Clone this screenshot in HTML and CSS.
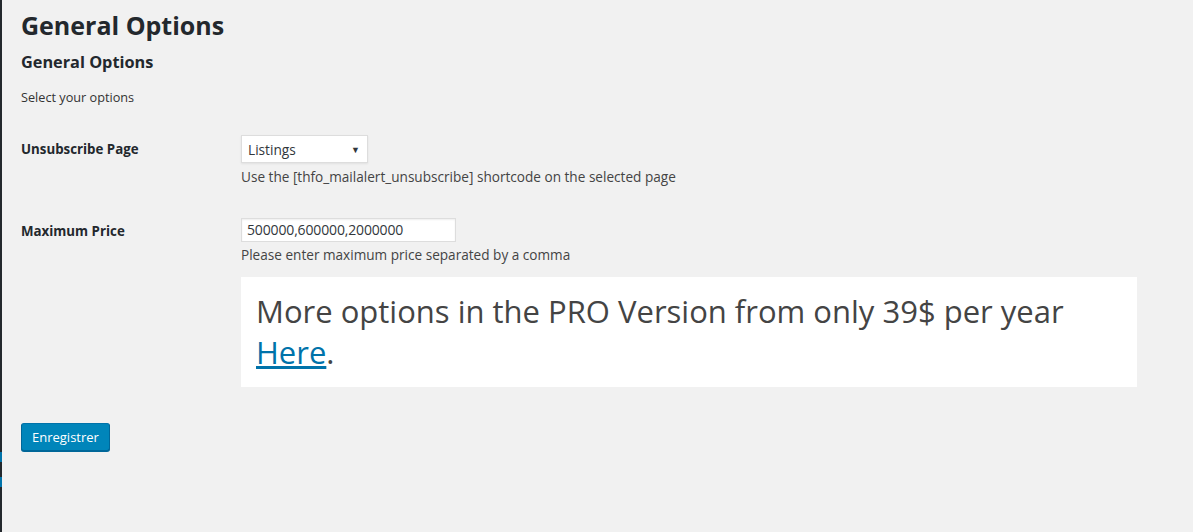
FILE: index.html
```html
<!DOCTYPE html>
<html lang="en">
<head>
<meta charset="utf-8">
<title>General Options</title>
<link rel="stylesheet" href="styles.css">
</head>
<body>
<div class="layout">
  <aside class="menu-edge">
    <span class="edge-mark"></span>
    <span class="edge-mark second"></span>
  </aside>
  <main class="wrap">
    <h1 class="page-title">General Options</h1>
    <h2 class="section-title">General Options</h2>
    <p class="section-desc">Select your options</p>
    <form class="form-table">
      <div class="row row-first">
        <label class="row-label row-label-select">Unsubscribe Page</label>
        <div class="row-field">
          <div class="select-box"><span>Listings</span><span class="caret">&#9660;</span></div>
          <p class="field-desc field-desc-first">Use the [thfo_mailalert_unsubscribe] shortcode on the selected page</p>
        </div>
      </div>
      <div class="row row-second">
        <label class="row-label row-label-input">Maximum Price</label>
        <div class="row-field">
          <div class="text-input">500000,600000,2000000</div>
          <p class="field-desc">Please enter maximum price separated by a comma</p>
        </div>
      </div>
      <div class="row row-promo">
        <span></span>
        <div class="promo">More options in the PRO Version from only 39$ per year <a href="#">Here</a>.</div>
      </div>
      <div class="submit-row">
        <button type="button" class="button-primary">Enregistrer</button>
      </div>
    </form>
  </main>
</div>
</body>
</html>
```
FILE: styles.css
```css
html, body {
  margin: 0;
  padding: 0;
  background: #f1f1f1;
}
body {
  font-family: "Open Sans", "Noto Sans", sans-serif;
  color: #23282d;
  font-size: 13px;
}
.layout {
  display: flex;
  min-height: 532px;
}
.menu-edge {
  width: 2px;
  flex: 0 0 2px;
  background: #23282d;
  display: flex;
  flex-direction: column;
  padding-top: 452px;
}
.edge-mark {
  display: block;
  height: 10px;
  background: #0073aa;
}
.edge-mark.second {
  margin-top: 15px;
}
.wrap {
  flex: 1;
  padding-left: 19px;
}
.page-title {
  margin: 0;
  padding-top: 10px;
  font-size: 25px;
  line-height: 30px;
  font-weight: 700;
}
.section-title {
  margin: 10px 0 0;
  font-size: 16.3px;
  line-height: 24px;
  font-weight: 700;
}
.section-desc {
  margin: 13px 0 0;
  line-height: 20px;
  font-size: 12.7px;
  color: #333;
}
.form-table {
  margin: 0;
}
.row {
  display: grid;
  grid-template-columns: 220px 1fr;
}
.row-first { margin-top: 28px; }
.row-second { margin-top: 31px; }
.row-promo { margin-top: 12px; }
.row-label {
  font-weight: 700;
  font-size: 13.3px;
}
.row-label-select { line-height: 28px; }
.row-label-input { line-height: 26px; }
.row-field {
  display: flex;
  flex-direction: column;
  align-items: flex-start;
}
.select-box {
  box-sizing: border-box;
  width: 127px;
  height: 28px;
  border: 1px solid #ddd;
  background: #fff;
  box-shadow: 0 1px 2px rgba(0,0,0,0.07);
  display: flex;
  align-items: center;
  justify-content: space-between;
  padding: 0 7px 0 6px;
  font-size: 13.7px;
  color: #32373c;
}
.caret {
  font-size: 9px;
  color: #32373c;
}
.text-input {
  box-sizing: border-box;
  width: 215px;
  height: 24px;
  border: 1px solid #ddd;
  background: #fff;
  box-shadow: inset 0 1px 2px rgba(0,0,0,0.07);
  line-height: 22px;
  padding: 0 5px;
  font-size: 14px;
  letter-spacing: -0.15px;
  color: #32373c;
}
.field-desc {
  margin: 3px 0 0;
  line-height: 20px;
  font-size: 13.6px;
  color: #444;
}
.field-desc-first { margin-top: 4px; }
.promo {
  box-sizing: border-box;
  width: 896px;
  height: 110px;
  background: #fff;
  padding: 14px 15px;
  font-size: 31px;
  line-height: 41px;
  color: #444;
}
.promo a {
  color: #0073aa;
  text-decoration: underline;
}
.submit-row {
  margin-top: 36px;
}
.button-primary {
  height: 28px;
  padding: 0 10px;
  background: #0085ba;
  border: 1px solid #0073aa;
  border-color: #0073aa #006799 #006799;
  border-radius: 3px;
  box-shadow: 0 1px 0 #006799;
  color: #fff;
  font-family: "Open Sans", "Noto Sans", sans-serif;
  font-size: 13px;
  line-height: 26px;
}
```
